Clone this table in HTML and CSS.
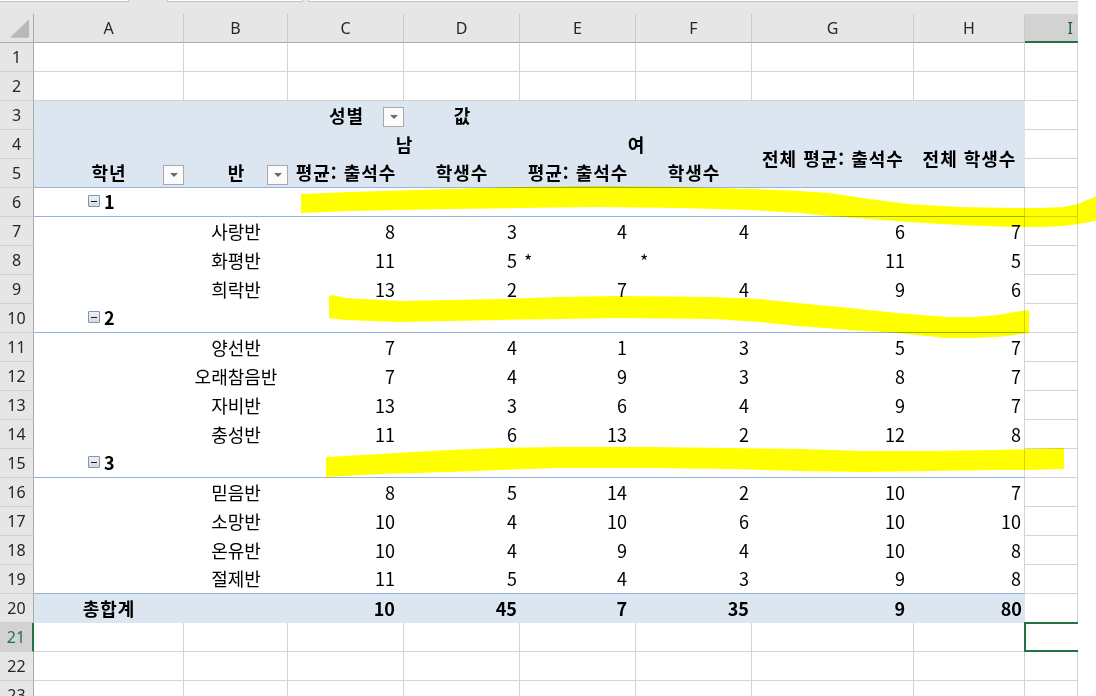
FILE: index.html
```html
<!DOCTYPE html>
<html lang="ko">
<head>
<meta charset="utf-8">
<title>Pivot</title>
<link rel="stylesheet" href="styles.css">
</head>
<body>
<div class="strip"><span class="fb fb1"></span><span class="fb fb2"></span><span class="fb fb3"></span></div>
<div class="sheet">
  <div class="corner"><svg width="34" height="28" viewBox="0 0 34 28"><polygon points="30,5 30,24 10,24" fill="#b9b9b9"/></svg></div>
  <div class="ch">A</div><div class="ch">B</div><div class="ch">C</div><div class="ch">D</div><div class="ch">E</div><div class="ch">F</div><div class="ch">G</div><div class="ch">H</div><div class="ch sel">I</div>

  <div class="rh">1</div><div class="c"></div><div class="c"></div><div class="c"></div><div class="c"></div><div class="c"></div><div class="c"></div><div class="c"></div><div class="c"></div><div class="c"></div>
  <div class="rh">2</div><div class="c"></div><div class="c"></div><div class="c"></div><div class="c"></div><div class="c"></div><div class="c"></div><div class="c"></div><div class="c"></div><div class="c"></div>

  <div class="rh">3</div>
  <div class="ph"></div><div class="ph"></div>
  <div class="ph b hd f3">성별<span class="dd"></span></div>
  <div class="ph b ctr">값</div>
  <div class="ph"></div><div class="ph"></div><div class="ph"></div><div class="ph"></div>
  <div class="c"></div>

  <div class="rh">4</div>
  <div class="ph"></div><div class="ph"></div>
  <div class="ph b ctr span2">남</div>
  <div class="ph b ctr span2">여</div>
  <div class="ph b hd ctr tall bb">전체 평균: 출석수</div>
  <div class="ph b hd ctr tall bb">전체 학생수</div>
  <div class="c"></div>

  <div class="rh">5</div>
  <div class="ph b hd ctr bb fbtn">학년<span class="dd"></span></div>
  <div class="ph b ctr bb fbtn">반<span class="dd"></span></div>
  <div class="ph b hd ctr bb">평균: 출석수</div>
  <div class="ph b hd ctr bb">학생수</div>
  <div class="ph b hd ctr bb">평균: 출석수</div>
  <div class="ph b hd ctr bb">학생수</div>
  <div class="c"></div>

  <div class="rh">6</div>
  <div class="p bb grp"><span class="tg"><i></i></span>1</div>
  <div class="p bb"></div><div class="p bb"></div><div class="p bb"></div><div class="p bb"></div><div class="p bb"></div><div class="p bb"></div><div class="p bb edge"></div>
  <div class="c"></div>

  <div class="rh">7</div><div class="p"></div><div class="p ctr">사랑반</div><div class="p num">8</div><div class="p cnt">3</div><div class="p num">4</div><div class="p cnt">4</div><div class="p num">6</div><div class="p cnt edge">7</div><div class="c"></div>
  <div class="rh">8</div><div class="p"></div><div class="p ctr">화평반</div><div class="p num">11</div><div class="p cnt">5</div><div class="p star">*</div><div class="p star">*</div><div class="p num">11</div><div class="p cnt edge">5</div><div class="c"></div>
  <div class="rh">9</div><div class="p"></div><div class="p ctr">희락반</div><div class="p num">13</div><div class="p cnt">2</div><div class="p num">7</div><div class="p cnt">4</div><div class="p num">9</div><div class="p cnt edge">6</div><div class="c"></div>

  <div class="rh">10</div>
  <div class="p bb grp"><span class="tg"><i></i></span>2</div>
  <div class="p bb"></div><div class="p bb"></div><div class="p bb"></div><div class="p bb"></div><div class="p bb"></div><div class="p bb"></div><div class="p bb edge"></div>
  <div class="c"></div>

  <div class="rh">11</div><div class="p"></div><div class="p ctr">양선반</div><div class="p num">7</div><div class="p cnt">4</div><div class="p num">1</div><div class="p cnt">3</div><div class="p num">5</div><div class="p cnt edge">7</div><div class="c"></div>
  <div class="rh">12</div><div class="p"></div><div class="p ctr">오래참음반</div><div class="p num">7</div><div class="p cnt">4</div><div class="p num">9</div><div class="p cnt">3</div><div class="p num">8</div><div class="p cnt edge">7</div><div class="c"></div>
  <div class="rh">13</div><div class="p"></div><div class="p ctr">자비반</div><div class="p num">13</div><div class="p cnt">3</div><div class="p num">6</div><div class="p cnt">4</div><div class="p num">9</div><div class="p cnt edge">7</div><div class="c"></div>
  <div class="rh">14</div><div class="p"></div><div class="p ctr">충성반</div><div class="p num">11</div><div class="p cnt">6</div><div class="p num">13</div><div class="p cnt">2</div><div class="p num">12</div><div class="p cnt edge">8</div><div class="c"></div>

  <div class="rh">15</div>
  <div class="p bb grp"><span class="tg"><i></i></span>3</div>
  <div class="p bb"></div><div class="p bb"></div><div class="p bb"></div><div class="p bb"></div><div class="p bb"></div><div class="p bb"></div><div class="p bb edge"></div>
  <div class="c"></div>

  <div class="rh">16</div><div class="p"></div><div class="p ctr">믿음반</div><div class="p num">8</div><div class="p cnt">5</div><div class="p num">14</div><div class="p cnt">2</div><div class="p num">10</div><div class="p cnt edge">7</div><div class="c"></div>
  <div class="rh">17</div><div class="p"></div><div class="p ctr">소망반</div><div class="p num">10</div><div class="p cnt">4</div><div class="p num">10</div><div class="p cnt">6</div><div class="p num">10</div><div class="p cnt edge">10</div><div class="c"></div>
  <div class="rh">18</div><div class="p"></div><div class="p ctr">온유반</div><div class="p num">10</div><div class="p cnt">4</div><div class="p num">9</div><div class="p cnt">4</div><div class="p num">10</div><div class="p cnt edge">8</div><div class="c"></div>
  <div class="rh">19</div><div class="p bb"></div><div class="p bb ctr">절제반</div><div class="p bb num">11</div><div class="p bb cnt">5</div><div class="p bb num">4</div><div class="p bb cnt">3</div><div class="p bb num">9</div><div class="p bb cnt edge">8</div><div class="c"></div>

  <div class="rh">20</div><div class="ph b hd ctr">총합계</div><div class="ph"></div><div class="ph b num">10</div><div class="ph b cnt">45</div><div class="ph b num">7</div><div class="ph b cnt">35</div><div class="ph b num">9</div><div class="ph b cnt">80</div><div class="c"></div>

  <div class="rh sel">21</div><div class="c"></div><div class="c"></div><div class="c"></div><div class="c"></div><div class="c"></div><div class="c"></div><div class="c"></div><div class="c"></div><div class="c act"></div>
  <div class="rh">22</div><div class="c"></div><div class="c"></div><div class="c"></div><div class="c"></div><div class="c"></div><div class="c"></div><div class="c"></div><div class="c"></div><div class="c"></div>
  <div class="rh">23</div><div class="c"></div><div class="c"></div><div class="c"></div><div class="c"></div><div class="c"></div><div class="c"></div><div class="c"></div><div class="c"></div><div class="c"></div>
</div>

<svg class="ink" width="1096" height="696" viewBox="0 0 1096 696">
  <path d="M301,194 L350,192 L450,189 L520,187 L594,186 L680,187 L751,189 L800,191 L829,193 L870,199 L908,204 L960,207 L1012,208 L1040,208 L1064,207 L1078,204 L1090,199 L1100,195 L1100,220 L1090,222 L1078,224 L1064,226 L1040,227 L1012,227 L960,225 L908,222 L870,219 L829,216 L800,213 L751,210 L680,208 L594,207 L520,208 L450,209 L350,211 L301,213 Z"/>
  <path d="M329,296 L333,295 L345,298 L400,301 L450,300 L500,299 L560,297 L618,296 L713,297 L760,299 L797,303 L850,308 L897,313 L947,317 L975,317 L997,315 L1015,312 L1029,310 L1029,333 L1015,335 L997,337 L970,338 L947,338 L897,333 L850,330 L797,326 L760,322 L713,319 L618,318 L560,319 L500,320 L450,321 L400,322 L345,320 L329,318 Z"/>
  <path d="M326,457 L380,454 L449,450 L500,448 L559,447 L650,447 L728,448 L800,449 L862,451 L930,451 L997,450 L1030,449 L1064,448 L1064,469 L1030,470 L997,470 L930,471 L862,472 L800,471 L728,469 L650,468 L559,468 L500,470 L449,472 L380,474 L326,477 Z"/>
</svg>
</body>
</html>
```
FILE: styles.css
```css
* { box-sizing: border-box; margin: 0; padding: 0; }
html, body { width: 1096px; height: 696px; overflow: hidden; background: #fff; }
body {
  position: relative;
  font-family: "Noto Sans CJK KR", "Noto Sans", sans-serif;
  font-size: 18px;
  color: #000;
}
.strip { height: 14px; width: 1078px; background: #e6e6e6; display: flex; align-items: flex-start; }
.fb { height: 2px; background: #fff; border-bottom: 1px solid #c3c3c3; }
.fb1 { width: 129px; margin-right: 38px; border-right: 1px solid #c3c3c3; }
.fb2 { width: 136px; margin-right: 5px; border-left: 1px solid #c3c3c3; border-right: 1px solid #c3c3c3; }
.fb3 { flex: 1; border-left: 1px solid #c3c3c3; }

.sheet {
  display: grid;
  grid-template-columns: 34px 150px 104px 116px 116px 116px 116px 162px 111px 53px;
  grid-auto-rows: 29px;
  width: 1078px;
}
.sheet > div { display: flex; align-items: center; white-space: nowrap; min-width: 0; }

.corner { background: #e6e6e6; border-right: 1px solid #ababab; border-bottom: 1px solid #ababab; }
.corner svg { display: block; }
.ch {
  background: #e6e6e6;
  border-right: 1px solid #cbcbcb;
  border-bottom: 1px solid #ababab;
  justify-content: center;
  font-family: "Noto Sans", sans-serif;
  font-size: 16px;
  color: #262626;
}
.ch.sel { background: #d2d2d2; border-bottom: 2px solid #217346; color: #1d5e3a; justify-content: flex-end; padding-right: 5px; border-right: none; }
.rh {
  background: #e6e6e6;
  border-right: 1px solid #ababab;
  border-bottom: 1px solid #cfcfcf;
  justify-content: center;
  font-family: "Noto Sans", sans-serif;
  font-size: 16px;
  color: #262626;
}
.rh.sel { background: #d2d2d2; border-right: 2px solid #217346; color: #217346; }

.c { border-right: 1px solid #d4d4d4; border-bottom: 1px solid #d4d4d4; }
.c.act { border: 2px solid #217346; border-right: none; margin-left: -1px; margin-top: -1px; }

.p, .ph { padding-bottom: 2px; }
.ph { background: #dce6f1; }
.bb { border-bottom: 1px solid #95b3d7; }
.edge { border-right: 1px solid #d4d4d4; }
.b { font-weight: 700; }
.hd { letter-spacing: 1px; }
.ctr { justify-content: center; }
.num { justify-content: flex-end; padding-right: 9px; }
.cnt { justify-content: flex-end; padding-right: 3px; }
.star { padding-left: 4px; }
.span2 { grid-column: span 2; }
.tall { grid-row: span 2; }

.f3 { justify-content: flex-end; padding-right: 40px; position: relative; }
.fbtn { position: relative; }
.dd {
  position: absolute;
  right: 0;
  top: 6px;
  width: 21px;
  height: 20px;
  border: 1px solid #a9a9a9;
  background: #fbfbfb;
  display: flex;
  align-items: center;
  justify-content: center;
}
.dd::after {
  content: "";
  width: 0;
  height: 0;
  border-left: 4px solid transparent;
  border-right: 4px solid transparent;
  border-top: 4px solid #6a6a6a;
}

.grp { padding-left: 54px; gap: 4px; font-weight: 700; }
.tg {
  width: 12px;
  height: 12px;
  border: 1px solid #8494ab;
  border-radius: 1px;
  background: linear-gradient(#eef1f5, #d3dae4);
  display: flex;
  align-items: center;
  justify-content: center;
}
.tg i { display: block; width: 6px; height: 1px; background: #1c1c1c; }

.ink {
  position: absolute;
  left: 0;
  top: 0;
  pointer-events: none;
  mix-blend-mode: multiply;
}
.ink path { fill: #ffff00; }
```
